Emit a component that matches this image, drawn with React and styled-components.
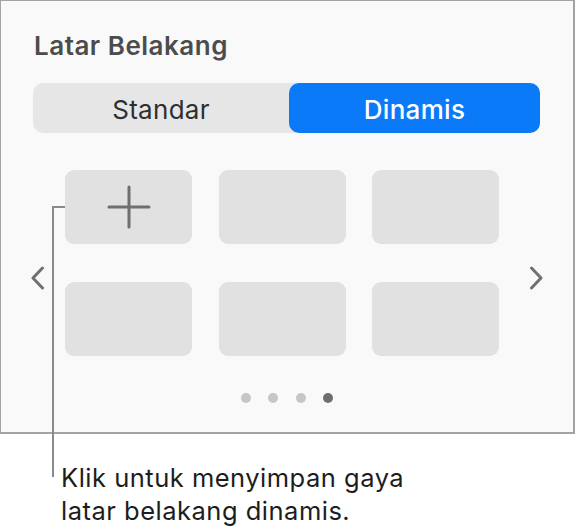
import React from 'react';
import styled, { createGlobalStyle } from 'styled-components';

const GlobalStyle = createGlobalStyle`
  html, body {
    margin: 0;
    padding: 0;
    background: #ffffff;
  }
  body {
    font-family: Inter, "Noto Sans", "Liberation Sans", sans-serif;
    -webkit-font-smoothing: antialiased;
  }
`;

const Figure = styled.div`
  position: relative;
  width: 575px;
  height: 529px;
  overflow: hidden;
`;

const Panel = styled.section`
  box-sizing: border-box;
  width: 575px;
  height: 434px;
  background: #f9f9f9;
  border-style: solid;
  border-color: #a3a3a3;
  border-width: 1px 2px 2px 1px;
  padding-top: 29.5px;
`;

const Title = styled.h2`
  margin: 0 0 0 33px;
  font-size: 26px;
  line-height: 30px;
  font-weight: 600;
  color: #4c4c4c;
  letter-spacing: 0.5px;
`;

const Segmented = styled.div`
  display: grid;
  grid-template-columns: 256px 1fr;
  height: 50px;
  margin: 22.5px 33px 0 32px;
  background: #e6e6e6;
  border-radius: 10px;
`;

const Segment = styled.div`
  display: flex;
  align-items: center;
  justify-content: center;
  padding-top: 3px;
  border-radius: 10px;
  font-size: 26px;
  letter-spacing: 0.3px;
  font-weight: ${p => (p.$active ? 500 : 400)};
  color: ${p => (p.$active ? '#ffffff' : '#2f2f2f')};
  background: ${p => (p.$active ? '#0a7af8' : 'transparent')};
`;

const Gallery = styled.div`
  display: grid;
  grid-template-columns: 64px 434px 1fr;
  margin-top: 37px;
`;

const Arrow = styled.div`
  display: flex;
  align-self: center;
  margin-top: 29px;
  justify-self: ${p => (p.$side === 'left' ? 'end' : 'start')};
  margin-right: ${p => (p.$side === 'left' ? '19px' : '0')};
  margin-left: ${p => (p.$side === 'right' ? '29px' : '0')};
`;

const Tiles = styled.div`
  display: grid;
  grid-template-columns: repeat(3, 127px);
  grid-auto-rows: 74px;
  column-gap: 26.5px;
  row-gap: 38px;
`;

const Tile = styled.div`
  display: flex;
  align-items: center;
  justify-content: center;
  background: #e1e1e1;
  border-radius: 9px;
`;

const Dots = styled.div`
  display: flex;
  justify-content: center;
  gap: 17.5px;
  margin-top: 37px;
`;

const Dot = styled.span`
  width: 10px;
  height: 10px;
  border-radius: 50%;
  background: ${p => (p.$current ? '#6e6e6e' : '#c6c6c6')};
`;

const Caption = styled.p`
  margin: 27px 0 0 61px;
  font-size: 25.5px;
  line-height: 33px;
  letter-spacing: 0.5px;
  font-weight: 400;
  color: #1d1d1d;
`;

const CalloutVertical = styled.div`
  position: absolute;
  left: 52px;
  top: 206px;
  width: 2px;
  height: 271px;
  background: #8a8a8a;
`;

const CalloutHorizontal = styled.div`
  position: absolute;
  left: 52px;
  top: 206px;
  width: 13px;
  height: 2px;
  background: #8a8a8a;
`;

const Chevron = ({ dir }) => (
  <svg width="16" height="24" viewBox="0 0 16 24" fill="none">
    <path
      d={dir === 'left' ? 'M12.5 2 L3 12 L12.5 22' : 'M3.5 2 L13 12 L3.5 22'}
      stroke="#707070"
      strokeWidth="3"
      strokeLinecap="round"
      strokeLinejoin="round"
    />
  </svg>
);

const PlusIcon = () => (
  <svg width="44" height="44" viewBox="0 0 44 44" fill="none">
    <path
      d="M22 2 V42 M2 22 H42"
      stroke="#6f6f6f"
      strokeWidth="3"
      strokeLinecap="round"
    />
  </svg>
);

const pages = [false, false, false, true];

export default function App() {
  return (
    <Figure>
      <GlobalStyle />
      <Panel>
        <Title>Latar Belakang</Title>
        <Segmented>
          <Segment>Standar</Segment>
          <Segment $active>Dinamis</Segment>
        </Segmented>

        <Gallery>
          <Arrow $side="left">
            <Chevron dir="left" />
          </Arrow>
          <Tiles>
            <Tile>
              <PlusIcon />
            </Tile>
            {[1, 2, 3, 4, 5].map(i => (
              <Tile key={i} />
            ))}
          </Tiles>
          <Arrow $side="right">
            <Chevron dir="right" />
          </Arrow>
        </Gallery>

        <Dots>
          {pages.map((current, i) => (
            <Dot key={i} $current={current} />
          ))}
        </Dots>
      </Panel>

      <Caption>
        Klik untuk menyimpan gaya
        <br />
        latar belakang dinamis.
      </Caption>

      <CalloutVertical />
      <CalloutHorizontal />
    </Figure>
  );
}
